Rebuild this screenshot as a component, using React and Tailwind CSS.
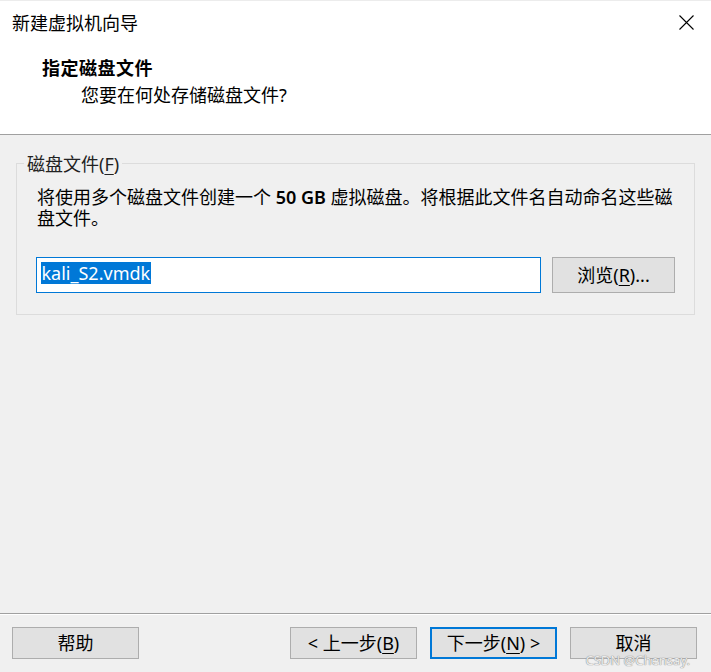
const font = { fontFamily: '"Noto Sans", "Noto Sans CJK SC", sans-serif' };

function Key({ children }) {
  return <span className="underline underline-offset-[3px] decoration-1">{children}</span>;
}

function WizButton({ children, primary, className = "" }) {
  return (
    <button
      className={
        "h-[32px] w-[127px] flex items-center justify-center bg-[#e1e1e1] text-[18px] leading-[22px] text-black " +
        (primary ? "border-2 border-[#0078d7] " : "border border-[#adadad] ") +
        className
      }
    >
      {children}
    </button>
  );
}

export default function App() {
  return (
    <div
      className="relative w-[711px] h-[672px] bg-[#f0f0f0] flex flex-col text-black overflow-hidden"
      style={font}
    >
      {/* 头部 */}
      <div className="h-[135px] shrink-0 bg-white border-t border-t-[#ececec] border-b border-b-[#a0a0a0] flex flex-col">
        <div className="h-[43px] flex items-center justify-between pl-[12px] pr-[17px]">
          <span className="text-[18px] leading-[24px]">新建虚拟机向导</span>
          <svg width="15" height="15" viewBox="0 0 15 15" className="text-black">
            <path d="M0.5 0.5L14.5 14.5M14.5 0.5L0.5 14.5" stroke="currentColor" strokeWidth="1.1" fill="none" />
          </svg>
        </div>
        <div className="mt-[12px] pl-[42px] text-[18px] leading-[24px] font-bold tracking-[0.5px]">
          指定磁盘文件
        </div>
        <div className="mt-[3px] pl-[81px] text-[18px] leading-[24px]">
          您要在何处存储磁盘文件?
        </div>
      </div>

      {/* 磁盘文件分组 */}
      <div className="mt-[28px] mx-[16px] relative border border-[#dcdcdc] pt-[23px] pl-[20px] pr-[14px] pb-[21px]">
        <span className="absolute left-[7px] -top-[11px] bg-[#f0f0f0] px-[3px] text-[18px] leading-[22px] text-[#222]">
          磁盘文件(<Key>F</Key>)
        </span>
        <p className="text-[18px] leading-[21px] whitespace-nowrap">
          将使用多个磁盘文件创建一个 <span className="font-semibold">50 GB</span> 虚拟磁盘。将根据此文件名自动命名这些磁
          <br />
          盘文件。
        </p>
        <div className="mt-[28px] flex items-center gap-[12px] -ml-[1px]">
          <div className="h-[36px] w-[505px] bg-white border border-[#0078d7] flex items-center pl-[4px]">
            <span className="bg-[#0078d7] text-white text-[18px] leading-[22px] px-[0.5px] -mt-[4px]">kali_S2.vmdk</span>
          </div>
          <button className="h-[36px] w-[123px] bg-[#e1e1e1] border border-[#adadad] text-[18px] leading-[22px] flex items-center justify-center -ml-[1px]">
            浏览(<Key>R</Key>)...
          </button>
        </div>
      </div>

      <div className="flex-1" />

      {/* 底部 */}
      <div className="shrink-0 border-t border-t-[#a0a0a0]">
        <div className="border-t border-t-white pt-[12px] pb-[13px] pl-[12px] pr-[14px] flex items-center">
          <WizButton>帮助</WizButton>
          <div className="flex-1" />
          <div className="flex items-center gap-[13px]">
            <WizButton>
              &lt; 上一步(<Key>B</Key>)
            </WizButton>
            <WizButton primary>
              下一步(<Key>N</Key>) &gt;
            </WizButton>
            <WizButton>取消</WizButton>
          </div>
        </div>
      </div>

      <span
        className="absolute right-[21px] bottom-[4px] text-[13px] leading-[16px] text-[#ececec]"
        style={{ textShadow: "0 0 1px #8a8a8a, 0 0 1px #8a8a8a" }}
      >
        CSDN @Chensay.
      </span>
    </div>
  );
}
